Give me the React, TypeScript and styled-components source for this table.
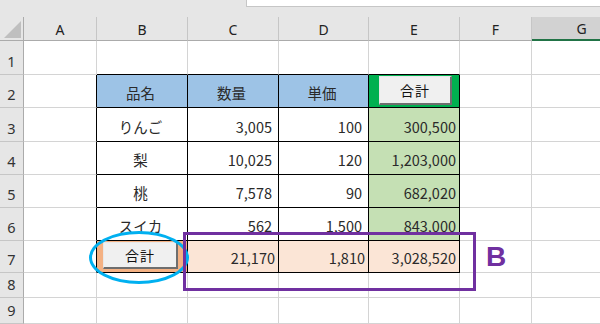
import React from "react"
import styled, { createGlobalStyle } from 'styled-components'

const GlobalStyle = createGlobalStyle`
    html, body {
        margin: 0;
        padding: 0;
        background: #ffffff;
    }
    * {
        box-sizing: border-box;
    }
`

const GRID = "#d4d4d4"
const EDGE = "#000000"

const Window = styled.div`
    position: relative;
    width: 600px;
    height: 324px;
    overflow: hidden;
    background: #ffffff;
    font-family: "Noto Sans CJK JP", "Noto Sans", sans-serif;
`

// row header + columns A..G
const Sheet = styled.div`
    display: grid;
    grid-template-columns: 24px 73px 91px 91px 90px 91px 72px 100px;
    grid-template-rows: 17px 24px 34px 33px 34px 33px 33px 33px 32px 25px 26px;
`

const TopStrip = styled.div`
    grid-column: 1 / -1;
    display: flex;
    align-items: flex-start;
    background: #e6e6e6;
    padding-left: 246px;
`

const FormulaBox = styled.div`
    flex: 1;
    height: 7px;
    background: #ffffff;
    border-left: 1px solid #c6c6c6;
    border-bottom: 1px solid #c6c6c6;
`

const Corner = styled.div`
    position: relative;
    background: #e6e6e6;
    border-right: 1px solid #ababab;
    border-bottom: 1px solid #ababab;

    &::after {
        content: "";
        position: absolute;
        left: 4px;
        top: 4px;
        width: 17px;
        height: 17px;
        background: #bfbfbf;
        clip-path: polygon(100% 0, 100% 100%, 0 100%);
    }
`

const ColHead = styled.div<{ $active?: boolean }>`
    display: flex;
    align-items: center;
    justify-content: center;
    background: ${p => (p.$active ? "#d2d2d2" : "#e6e6e6")};
    border-right: 1px solid #c6c6c6;
    border-bottom: ${p => (p.$active ? "2px solid #217346" : "1px solid #ababab")};
    font-family: "Noto Sans", sans-serif;
    font-size: 14px;
    color: #222;
    padding-top: 1px;
`

const RowHead = styled.div`
    display: flex;
    align-items: flex-end;
    justify-content: center;
    padding-bottom: 3px;
    background: #e6e6e6;
    border-right: 1px solid #ababab;
    border-bottom: 1px solid #c6c6c6;
    font-family: "Noto Sans", sans-serif;
    font-size: 14.5px;
    line-height: 20px;
    color: #333;
`

const Cell = styled.div<{
    $fill?: string
    $align?: "center" | "right"
    $pad?: number
    $right?: string
    $bottom?: string
}>`
    display: flex;
    align-items: flex-end;
    justify-content: ${p => (p.$align === "right" ? "flex-end" : "center")};
    padding: 0 ${p => p.$pad ?? 3}px 4px 0;
    background: ${p => p.$fill ?? "#ffffff"};
    border-right: 1px solid ${p => p.$right ?? GRID};
    border-bottom: 1px solid ${p => p.$bottom ?? GRID};
    font-size: 14.5px;
    line-height: 20px;
    color: #2a2a2a;
    white-space: nowrap;
`

const ButtonCell = styled(Cell)<{ $inset: string }>`
    align-items: stretch;
    justify-content: stretch;
    padding: ${p => p.$inset};
`

const FormButton = styled.div`
    flex: 1;
    display: flex;
    align-items: center;
    justify-content: center;
    background: #f0f0f0;
    border-top: 1px solid #e8e8e8;
    border-left: 1px solid #e8e8e8;
    border-right: 2px solid #6e6e6e;
    border-bottom: 2px solid #6e6e6e;
    font-size: 14px;
    color: #111;
    letter-spacing: 1px;
`

const Circle = styled.div`
    position: absolute;
    left: 89px;
    top: 231px;
    width: 100px;
    height: 53px;
    border: 3px solid #00b0f0;
    border-radius: 50%;
`

const Frame = styled.div`
    position: absolute;
    left: 183px;
    top: 232px;
    width: 293px;
    height: 59px;
    border: 3px solid #7030a0;
`

const Tag = styled.div`
    position: absolute;
    left: 486px;
    top: 243px;
    font-family: "Liberation Sans", Arial, sans-serif;
    font-weight: 700;
    font-size: 28px;
    line-height: 1;
    color: #7030a0;
`

const columns = ["A", "B", "C", "D", "E", "F", "G"]

const items = [
    { name: "りんご", qty: "3,005", price: "100", total: "300,500" },
    { name: "梨", qty: "10,025", price: "120", total: "1,203,000" },
    { name: "桃", qty: "7,578", price: "90", total: "682,020" },
    { name: "スイカ", qty: "562", price: "1,500", total: "843,000" },
]

const HEAD_FILL = "#9dc3e6"
const SUM_FILL = "#c5e0b4"
const TOTAL_FILL = "#fbe5d6"

const App: React.FC = () => {
    return (
        <Window>
            <GlobalStyle />
            <Sheet>
                <TopStrip>
                    <FormulaBox />
                </TopStrip>

                <Corner />
                {columns.map(c => (
                    <ColHead key={c} $active={c === "G"}>{c}</ColHead>
                ))}

                {/* row 1 */}
                <RowHead>1</RowHead>
                <Cell />
                <Cell $bottom={EDGE} />
                <Cell $bottom={EDGE} />
                <Cell $bottom={EDGE} />
                <Cell $bottom={EDGE} />
                <Cell />
                <Cell />

                {/* row 2: headings */}
                <RowHead>2</RowHead>
                <Cell $right={EDGE} />
                <Cell $fill={HEAD_FILL} $right={EDGE} $bottom={EDGE}>品名</Cell>
                <Cell $fill={HEAD_FILL} $right={EDGE} $bottom={EDGE}>数量</Cell>
                <Cell $fill={HEAD_FILL} $right={EDGE} $bottom={EDGE}>単価</Cell>
                <ButtonCell $fill="#00b050" $right={EDGE} $bottom={EDGE} $inset="1px 7px 2px 10px">
                    <FormButton>合計</FormButton>
                </ButtonCell>
                <Cell />
                <Cell />

                {items.map((it, i) => (
                    <React.Fragment key={it.name}>
                        <RowHead>{i + 3}</RowHead>
                        <Cell $right={EDGE} />
                        <Cell $right={EDGE} $bottom={EDGE}>{it.name}</Cell>
                        <Cell $align="right" $pad={6} $right={EDGE} $bottom={EDGE}>{it.qty}</Cell>
                        <Cell $align="right" $pad={6} $right={EDGE} $bottom={EDGE}>{it.price}</Cell>
                        <Cell $align="right" $fill={SUM_FILL} $right={EDGE} $bottom={EDGE}>{it.total}</Cell>
                        <Cell />
                        <Cell />
                    </React.Fragment>
                ))}

                {/* row 7: totals */}
                <RowHead>7</RowHead>
                <Cell $right={EDGE} />
                <ButtonCell $fill="#f4b183" $right={EDGE} $bottom={EDGE} $inset="1px 9px 3px 6px">
                    <FormButton>合計</FormButton>
                </ButtonCell>
                <Cell $align="right" $fill={TOTAL_FILL} $right={EDGE} $bottom={EDGE}>21,170</Cell>
                <Cell $align="right" $fill={TOTAL_FILL} $right={EDGE} $bottom={EDGE}>1,810</Cell>
                <Cell $align="right" $fill={TOTAL_FILL} $right={EDGE} $bottom={EDGE}>3,028,520</Cell>
                <Cell />
                <Cell />

                {[8, 9].map(r => (
                    <React.Fragment key={r}>
                        <RowHead>{r}</RowHead>
                        <Cell />
                        <Cell />
                        <Cell />
                        <Cell />
                        <Cell />
                        <Cell />
                        <Cell />
                    </React.Fragment>
                ))}
            </Sheet>

            <Circle />
            <Frame />
            <Tag>B</Tag>
        </Window>
    )
}

export default App
